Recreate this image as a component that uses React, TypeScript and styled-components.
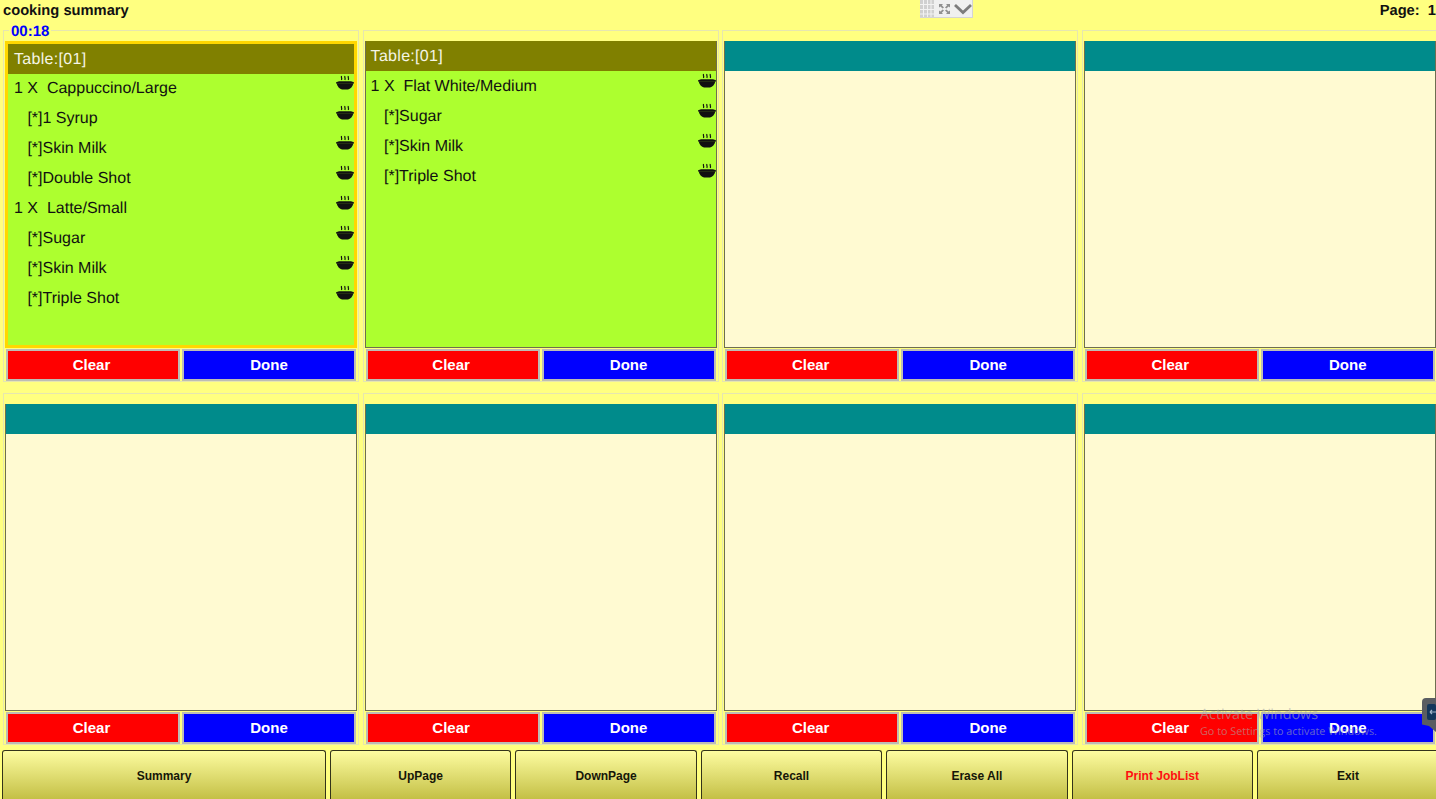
import * as React from "react";
import styled, { createGlobalStyle } from "styled-components";

const GlobalStyle = createGlobalStyle`
  html, body {
    margin: 0;
    padding: 0;
    width: 1436px;
    height: 799px;
    overflow: hidden;
    background: #ffff80;
    font-family: "Liberation Sans", Arial, sans-serif;
    text-rendering: geometricPrecision;
  }
`;

const Page = styled.div`
  position: relative;
  width: 1436px;
  height: 799px;
  overflow: hidden;
`;

const TopBar = styled.div`
  position: relative;
  display: flex;
  justify-content: space-between;
  height: 30px;
  padding: 3px 0 0 3px;
  box-sizing: border-box;
`;

const TopText = styled.div`
  font-size: 14.7px;
  font-weight: bold;
  line-height: 17px;
  color: #111;
  white-space: pre;
`;

const ToolStrip = styled.div`
  position: absolute;
  left: 920px;
  top: 0;
  display: flex;
  align-items: center;
  width: 53px;
  height: 18px;
  background: #f0f0f0;
  border-right: 1px solid #d4d4d4;
  border-bottom: 1px solid #d4d4d4;
  box-sizing: border-box;
`;

const Board = styled.div`
  display: grid;
  grid-template-columns: repeat(4, 356px);
  grid-auto-rows: 352px;
  column-gap: 3.6px;
  row-gap: 11px;
  padding-left: 3px;
`;

const Group = styled.div`
  position: relative;
  display: flex;
  flex-direction: column;
  box-sizing: border-box;
  padding: 10px 1px 0;
  border: 1px solid #e6e6b0;
`;

const Legend = styled.span`
  position: absolute;
  left: 5px;
  top: -8px;
  padding: 0 2px;
  background: #ffff80;
  font-size: 15px;
  font-weight: bold;
  line-height: 17px;
  color: #0000ff;
`;

const Ticket = styled.div<{ $filled?: boolean; $active?: boolean }>`
  display: flex;
  flex: none;
  flex-direction: column;
  height: 307px;
  box-sizing: border-box;
  background: ${(p) => (p.$filled ? "#adff2f" : "#fffad2")};
  border: ${(p) => (p.$active ? "3px solid #ffd700" : "1px solid #6e6e50")};
`;

const TicketHead = styled.div<{ $filled?: boolean; $active?: boolean }>`
  flex: none;
  height: 30px;
  margin-top: ${(p) => (p.$active ? "0" : "-1px")};
  margin-bottom: ${(p) => (p.$active ? "0" : "1px")};
  padding-left: ${(p) => (p.$active ? "6px" : "5px")};
  background: ${(p) => (p.$filled ? "#808000" : "#008b8b")};
  color: #f5f5e6;
  font-size: 16px;
  letter-spacing: 0.3px;
  line-height: 32px;
`;

const Row = styled.div<{ $sub?: boolean; $active?: boolean }>`
  position: relative;
  flex: none;
  height: 30px;
  padding-left: ${(p) => (p.$sub ? 13.4 : 0) + (p.$active ? 6 : 5)}px;
  color: #111;
  font-size: 16px;
  line-height: 30px;
  white-space: pre;
`;

const BowlSlot = styled.span`
  position: absolute;
  right: 0;
  top: 1px;
  display: flex;
`;

const ButtonRow = styled.div`
  display: grid;
  flex: none;
  grid-template-columns: 1fr 1fr;
  column-gap: 2px;
  margin-top: 1px;
  padding: 0 1px;
`;

const ActionButton = styled.button<{ $done?: boolean }>`
  padding: 0 ${(p) => (p.$done ? "0" : "3px")} 2px 0;
  box-sizing: border-box;
  height: 32px;
  border: 2px solid #bdbdb4;
  outline: none;
  background: ${(p) => (p.$done ? "#0000ff" : "#ff0000")};
  color: #fff;
  font-family: inherit;
  font-size: 15px;
  font-weight: bold;
`;

const Footer = styled.div`
  display: grid;
  grid-template-columns: 324px repeat(5, 181.4px) 182px;
  column-gap: 4px;
  margin-top: 5px;
  padding-left: 2px;
`;

const FooterButton = styled.button<{ $alert?: boolean }>`
  height: 52px;
  padding: 0 0 2px;
  box-sizing: border-box;
  border: 1px solid #33331a;
  border-bottom: none;
  border-radius: 3px 3px 0 0;
  background: linear-gradient(#fdfca0, #c0bc40);
  color: ${(p) => (p.$alert ? "#ff1010" : "#161608")};
  font-family: inherit;
  font-size: 12px;
  font-weight: bold;
`;

const Watermark = styled.div`
  position: absolute;
  left: 1200px;
  top: 706px;
  color: rgba(170, 170, 170, 0.6);
  font-family: "Open Sans", "Liberation Sans", sans-serif;
  pointer-events: none;
`;

const WatermarkTitle = styled.div`
  font-size: 14.4px;
  line-height: 18px;
`;

const WatermarkNote = styled.div`
  font-size: 10.8px;
  line-height: 15px;
`;

const SideHandle = styled.div`
  position: absolute;
  left: 1422px;
  top: 698px;
  width: 14px;
  height: 34px;
  padding: 6px 0 0 5px;
  box-sizing: border-box;
  background: #5a5d62;
  border-radius: 4px 0 0 0;
  clip-path: polygon(0 0, 100% 0, 100% 100%, 50% 82%, 0 78%);
`;

const Bowl = () => (
  <svg width="18" height="16" viewBox="0 0 18 16">
    <g fill="none" stroke="#111" strokeWidth="1.2">
      <path d="M5.6 1c-1 1.4 1 2.2-0.2 4" />
      <path d="M9 1c-1 1.4 1 2.2-0.2 4" />
      <path d="M12.4 1c-1 1.4 1 2.2-0.2 4" />
    </g>
    <path d="M3 6.2h12l2.9 1v1.2H0.1V7.2z" fill="#111" />
    <path d="M0.6 8.2h16.8c-0.6 3.4-3 5.6-5.4 6.2H6c-2.4-0.6-4.8-2.8-5.4-6.2z" fill="#111" />
  </svg>
);

const GridIcon = () => (
  <svg width="14" height="17" viewBox="0 0 14 17">
    <rect width="14" height="17" fill="#d0d0d0" />
    <path d="M3.5 0v17M7.5 0v17M11 0v17M0 4.5h14M0 9.5h14M0 14h14" stroke="#f2f2f2" strokeWidth="1" />
  </svg>
);

const ExpandIcon = () => (
  <svg width="20" height="14" viewBox="0 0 20 14" opacity="0.85">
    <path
      d="M5 2h4L7.8 3.2 10 5.4 8.6 6.6 6.4 4.4 5 5.6zM16 2v3.6l-1.4-1.2-2.2 2.2L11 5.4l2.2-2.2L12 2zM5 12V8.4l1.4 1.2 2.2-2.2L10 8.6l-2.2 2.2L9 12zM16 12h-4l1.2-1.2L11 8.6l1.4-1.2 2.2 2.2L16 8.4z"
      fill="#808080"
    />
  </svg>
);

const ChevronIcon = () => (
  <svg width="18" height="12" viewBox="0 0 18 12">
    <path d="M1 2l8 7.5L17 2" fill="none" stroke="#7c7c7c" strokeWidth="2.8" />
  </svg>
);

const HandleIcon = () => (
  <svg width="9" height="16" viewBox="0 0 9 16" style={{ display: "block" }}>
    <rect width="9" height="16" rx="2" fill="#14375c" />
    <path d="M3 8h6M3 8l2-2M3 8l2 2" fill="none" stroke="#9fb4c8" strokeWidth="1.2" />
  </svg>
);

type Item = { text: string; sub?: boolean };

const syrupOrder: Item[] = [
  { text: "1 X  Cappuccino/Large" },
  { text: "[*]1 Syrup", sub: true },
  { text: "[*]Skin Milk", sub: true },
  { text: "[*]Double Shot", sub: true },
  { text: "1 X  Latte/Small" },
  { text: "[*]Sugar", sub: true },
  { text: "[*]Skin Milk", sub: true },
  { text: "[*]Triple Shot", sub: true },
];

const flatWhiteOrder: Item[] = [
  { text: "1 X  Flat White/Medium" },
  { text: "[*]Sugar", sub: true },
  { text: "[*]Skin Milk", sub: true },
  { text: "[*]Triple Shot", sub: true },
];

const tickets: { title?: string; items?: Item[]; active?: boolean; timer?: string }[] = [
  { title: "Table:[01]", items: syrupOrder, active: true, timer: "00:18" },
  { title: "Table:[01]", items: flatWhiteOrder },
  {},
  {},
  {},
  {},
  {},
  {},
];

const footerLabels = ["Summary", "UpPage", "DownPage", "Recall", "Erase All", "Print JobList", "Exit"];

export default function App() {
  return (
    <Page>
      <GlobalStyle />
      <TopBar>
        <TopText>cooking summary</TopText>
        <ToolStrip>
          <GridIcon />
          <ExpandIcon />
          <ChevronIcon />
        </ToolStrip>
        <TopText>{"Page:  1"}</TopText>
      </TopBar>
      <Board>
        {tickets.map((t, i) => (
          <Group key={i}>
            {t.timer && <Legend>{t.timer}</Legend>}
            <Ticket $filled={!!t.items} $active={t.active}>
              <TicketHead $filled={!!t.items} $active={t.active}>
                {t.title}
              </TicketHead>
              {t.items?.map((item, j) => (
                <Row key={j} $sub={item.sub} $active={t.active}>
                  {item.text}
                  <BowlSlot>
                    <Bowl />
                  </BowlSlot>
                </Row>
              ))}
            </Ticket>
            <ButtonRow>
              <ActionButton>Clear</ActionButton>
              <ActionButton $done>Done</ActionButton>
            </ButtonRow>
          </Group>
        ))}
      </Board>
      <Footer>
        {footerLabels.map((label) => (
          <FooterButton key={label} $alert={label === "Print JobList"}>
            {label}
          </FooterButton>
        ))}
      </Footer>
      <Watermark>
        <WatermarkTitle>Activate Windows</WatermarkTitle>
        <WatermarkNote>Go to Settings to activate Windows.</WatermarkNote>
      </Watermark>
      <SideHandle>
        <HandleIcon />
      </SideHandle>
    </Page>
  );
}
